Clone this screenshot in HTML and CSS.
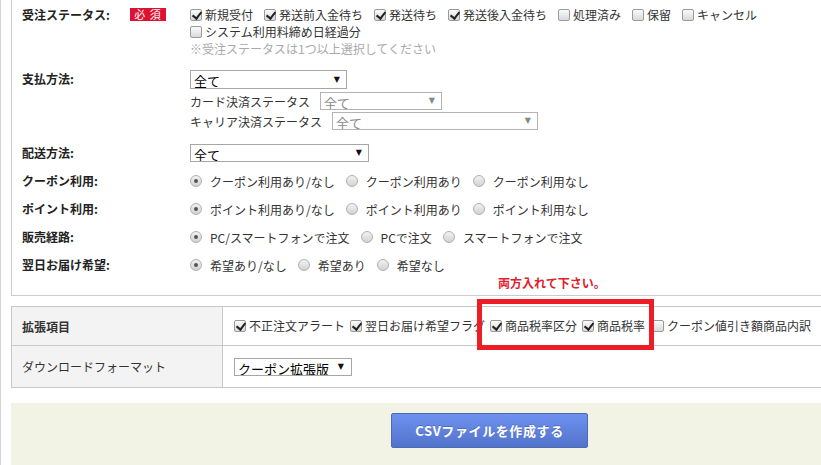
FILE: index.html
```html
<!DOCTYPE html>
<html lang="ja">
<head>
    <meta charset="UTF-8">
    <meta name="viewport" content="width=device-width, initial-scale=1.0">
    <title>CSV出力</title>
    <link rel="stylesheet" href="styles.css">
</head>
<body>
<div class="page">
    <div class="search-panel">
        <div class="form-row row-status">
            <div class="row-label">受注ステータス:<span class="badge">必 須</span></div>
            <div class="row-body">
                <div class="check-line">
                    <label class="check"><input type="checkbox" checked>新規受付</label>
                    <label class="check"><input type="checkbox" checked>発送前入金待ち</label>
                    <label class="check"><input type="checkbox" checked>発送待ち</label>
                    <label class="check"><input type="checkbox" checked>発送後入金待ち</label>
                    <label class="check"><input type="checkbox">処理済み</label>
                    <label class="check"><input type="checkbox">保留</label>
                    <label class="check"><input type="checkbox">キャンセル</label>
                </div>
                <div class="check-line">
                    <label class="check"><input type="checkbox">システム利用料締め日経過分</label>
                </div>
                <p class="note">※受注ステータスは1つ以上選択してください</p>
            </div>
        </div>

        <div class="form-row row-payment">
            <div class="row-label">支払方法:</div>
            <div class="row-body">
                <span class="select select-main" style="width:157px"><select><option>全て</option></select></span>
                <div class="sub-line first">
                    カード決済ステータス
                    <span class="select select-sub" style="width:122px"><select><option>全て</option></select></span>
                </div>
                <div class="sub-line">
                    キャリア決済ステータス
                    <span class="select select-sub" style="width:206px"><select><option>全て</option></select></span>
                </div>
            </div>
        </div>

        <div class="form-row row-delivery">
            <div class="row-label">配送方法:</div>
            <div class="row-body">
                <span class="select select-main select-short" style="width:179px"><select><option>全て</option></select></span>
            </div>
        </div>

        <div class="form-row row-radio">
            <div class="row-label">クーポン利用:</div>
            <div class="row-body radio-line">
                <label class="radio"><input type="radio" name="coupon" checked>クーポン利用あり/なし</label>
                <label class="radio"><input type="radio" name="coupon">クーポン利用あり</label>
                <label class="radio"><input type="radio" name="coupon">クーポン利用なし</label>
            </div>
        </div>

        <div class="form-row row-radio">
            <div class="row-label">ポイント利用:</div>
            <div class="row-body radio-line">
                <label class="radio"><input type="radio" name="point" checked>ポイント利用あり/なし</label>
                <label class="radio"><input type="radio" name="point">ポイント利用あり</label>
                <label class="radio"><input type="radio" name="point">ポイント利用なし</label>
            </div>
        </div>

        <div class="form-row row-radio">
            <div class="row-label">販売経路:</div>
            <div class="row-body radio-line">
                <label class="radio"><input type="radio" name="route" checked>PC/スマートフォンで注文</label>
                <label class="radio"><input type="radio" name="route">PCで注文</label>
                <label class="radio"><input type="radio" name="route">スマートフォンで注文</label>
            </div>
        </div>

        <div class="form-row row-radio">
            <div class="row-label">翌日お届け希望:</div>
            <div class="row-body radio-line">
                <label class="radio"><input type="radio" name="nextday" checked>希望あり/なし</label>
                <label class="radio"><input type="radio" name="nextday">希望あり</label>
                <label class="radio"><input type="radio" name="nextday">希望なし</label>
            </div>
        </div>
    </div>

    <table class="option-table">
        <colgroup>
            <col class="col-head">
            <col>
        </colgroup>
        <tr class="row-ext">
            <th class="th-bold">拡張項目</th>
            <td>
                <label class="table-check"><input type="checkbox" checked>不正注文アラート</label><label class="table-check"><input type="checkbox" checked>翌日お届け希望フラグ</label><label class="table-check"><input type="checkbox" checked>商品税率区分</label><label class="table-check"><input type="checkbox" checked>商品税率</label><label class="table-check last"><input type="checkbox">クーポン値引き額商品内訳</label>
            </td>
        </tr>
        <tr class="row-format">
            <th>ダウンロードフォーマット</th>
            <td>
                <span class="select select-format" style="width:118px"><select><option>クーポン拡張版</option></select></span>
            </td>
        </tr>
    </table>

    <div class="action-bar">
        <button class="btn-csv" type="button">CSVファイルを作成する</button>
    </div>

    <!-- annotations drawn over the screenshot -->
    <div class="annotation-note">両方入れて下さい。</div>
    <div class="annotation-box"></div>
</div>
</body>
</html>
```

FILE: styles.css
```css
* {
    box-sizing: border-box;
}
body {
    margin: 0;
    font-family: "Noto Sans CJK JP", sans-serif;
    font-size: 12px;
    color: #333;
    background: #fff;
    overflow: hidden;
}
.page {
    position: relative;
    min-height: 465px;
    border-left: 1px solid #d4d4d4;
    padding-left: 10px;
}

/* search conditions */
.search-panel {
    border-left: 1px solid #cbcbcb;
    border-bottom: 1px solid #cbcbcb;
    padding: 6px 0 21px 10px;
}
.form-row {
    display: flex;
    align-items: flex-start;
}
.row-label {
    width: 168px;
    flex: none;
    display: flex;
    align-items: center;
    font-weight: bold;
    color: #222;
    line-height: 17px;
}
.badge {
    display: inline-block;
    width: 36px;
    height: 13px;
    margin-left: 20px;
    background: #dc1232;
    color: #fff;
    font-size: 11px;
    font-weight: normal;
    line-height: 13px;
    letter-spacing: 1px;
    text-align: center;
}
.row-body {
    line-height: 17px;
}
.check-line {
    display: flex;
    align-items: center;
    height: 17px;
}
.note {
    margin: 0;
    height: 17px;
    color: #aaa;
}
.row-payment {
    margin-top: 13px;
}
.row-delivery {
    margin-top: 14px;
}
.row-radio {
    margin-top: 10px;
}
.row-radio .row-label {
    line-height: 18px;
}
.radio-line {
    display: flex;
    align-items: center;
    height: 18px;
}
.sub-line {
    display: flex;
    align-items: center;
    height: 18px;
    margin-top: 2px;
}
.sub-line.first {
    margin-top: 3px;
}
.sub-line .select {
    margin-left: 10px;
}

/* checkboxes and radios */
.check,
.table-check,
.radio {
    display: inline-flex;
    align-items: center;
    white-space: nowrap;
}
.check {
    margin-right: 11px;
}
.table-check {
    margin-right: 5px;
}
.table-check.last {
    margin-left: 2px;
}
.radio {
    margin-right: 11px;
}
input[type="checkbox"],
input[type="radio"] {
    appearance: none;
    -webkit-appearance: none;
    position: relative;
    flex: none;
    width: 12px;
    height: 12px;
    margin: 0 3px 0 0;
    border: 1px solid #9a9a9a;
    background: linear-gradient(#fbfbfb, #d9d9d9);
}
input[type="checkbox"] {
    border-radius: 2px;
}
input[type="checkbox"]:checked::after {
    content: "";
    position: absolute;
    left: 3px;
    top: 0;
    width: 4px;
    height: 7px;
    border: solid #222;
    border-width: 0 2px 2px 0;
    transform: rotate(38deg);
}
input[type="radio"] {
    border-radius: 50%;
    border-color: #b0b0b0;
    margin-right: 8px;
    background: linear-gradient(#f2f2f2, #d2d2d2);
}
input[type="radio"]:checked::after {
    content: "";
    position: absolute;
    left: 3px;
    top: 3px;
    width: 4px;
    height: 4px;
    border-radius: 50%;
    background: #555;
}

/* selects */
.select {
    position: relative;
    display: inline-block;
    height: 19px;
    vertical-align: top;
}
.select select {
    appearance: none;
    -webkit-appearance: none;
    width: 100%;
    height: 100%;
    margin: 0;
    padding: 0 0 0 3px;
    border: 1px solid #a6a6a6;
    border-radius: 0;
    background: #fff;
    font-family: "Noto Sans CJK JP", sans-serif;
    font-size: 13px;
    color: #000;
    outline: none;
}
.select::after {
    content: "▼";
    position: absolute;
    right: 7px;
    top: 50%;
    transform: translateY(-50%);
    font-family: "DejaVu Sans", sans-serif;
    font-size: 8px;
    line-height: 8px;
    color: #111;
    pointer-events: none;
}
.select-short {
    height: 18px;
}
.select-sub {
    height: 18px;
}
.select-sub select {
    color: #888;
    border-color: #b4b4b4;
}
.select-sub::after {
    color: #888;
}
.select-format {
    height: 18px;
}
.select-format::after {
    right: 8px;
}

/* extra options table */
.option-table {
    width: 100%;
    margin-top: 10px;
    border-collapse: collapse;
    table-layout: fixed;
}
.col-head {
    width: 211px;
}
.option-table th,
.option-table td {
    border: 1px solid #c8c8c8;
    padding: 0 10px;
    text-align: left;
    white-space: nowrap;
    overflow: hidden;
}
.option-table td {
    border-right: none;
    padding-left: 11px;
}
.option-table th {
    background: #f3f3f3;
    font-weight: normal;
    color: #333;
}
.option-table th.th-bold {
    font-weight: bold;
}
.row-ext th,
.row-ext td {
    height: 39px;
}
.row-format th,
.row-format td {
    height: 42px;
}

/* footer */
.action-bar {
    margin-top: 15px;
    height: 80px;
    padding: 10px 0 0 380px;
    display: flex;
    align-items: flex-start;
    background: #f3f3e5;
}
.btn-csv {
    width: 197px;
    height: 35px;
    border: 1px solid #5069b4;
    border-radius: 2px;
    background: linear-gradient(#6d92ef, #5273cb);
    color: #fff;
    font-family: "Noto Sans CJK JP", sans-serif;
    font-size: 13px;
    font-weight: bold;
    letter-spacing: 0.6px;
    text-shadow: 0 -1px 0 rgba(0, 0, 0, 0.2);
    cursor: pointer;
}

/* red annotations */
.annotation-note {
    position: absolute;
    left: 497px;
    top: 274px;
    color: #e3202a;
    font-size: 12px;
    font-weight: bold;
    line-height: 17px;
}
.annotation-box {
    position: absolute;
    left: 476px;
    top: 299px;
    width: 177px;
    height: 51px;
    border: 5px solid #ee1c25;
}
```
